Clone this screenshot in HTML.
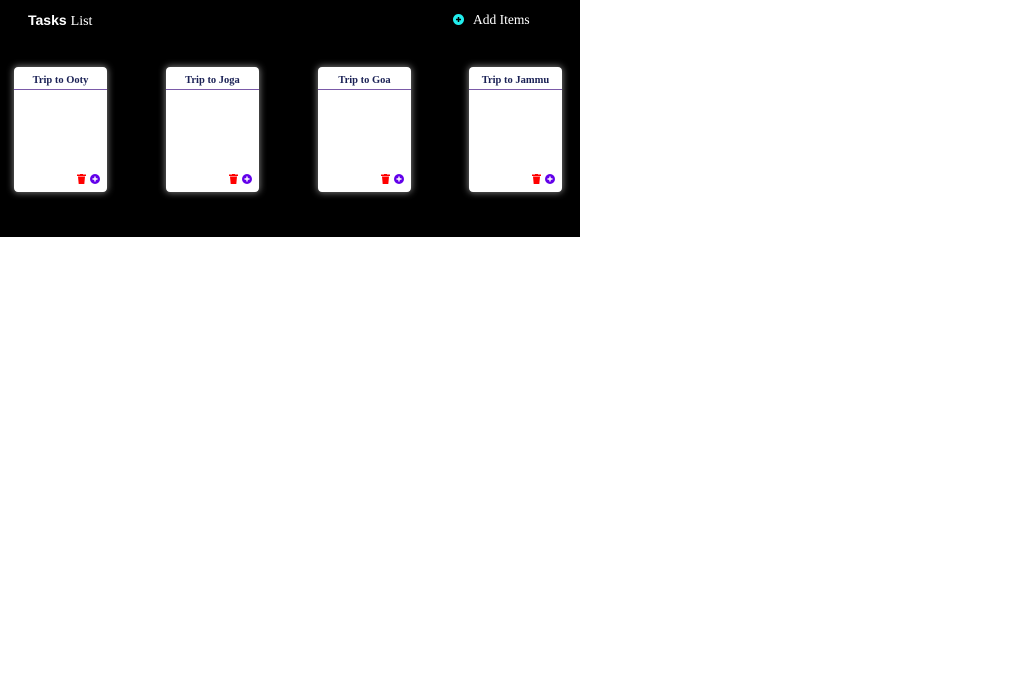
<!DOCTYPE html>
<html><head><style>
body{margin:0;background:#fff;}
.wrap{position:absolute;left:0;top:0;width:580px;height:237px;background:#000;}
.title{position:absolute;left:28px;top:12px;color:#fff;}
.title b{font-family:"Liberation Sans",sans-serif;font-size:14px;}
.title span{font-family:"Liberation Serif",serif;font-size:14px;}
.add{position:absolute;left:453px;top:12px;color:#fff;font-family:"Liberation Serif",serif;font-size:13.5px;}
.add .c{display:inline-block;width:11px;height:11px;border-radius:50%;background:#2ee;vertical-align:-1px;margin-right:9px;position:relative;}
.card{position:absolute;top:67px;width:93px;height:125px;background:#fff;border-radius:4px;box-shadow:0 0 7px 1px rgba(255,255,255,.45);}
.card h3{margin:0;height:22px;border-bottom:1px solid #7a5aa8;font:bold 10.5px "Liberation Serif",serif;color:#1a2155;text-align:center;line-height:27px;}
.tr{position:absolute;left:63px;top:107px;}
.pl{position:absolute;left:76px;top:107px;}
</style></head><body>
<div class="wrap">
<div class="title"><b>Tasks</b> <span>List</span></div>
<div class="add"><span class="c"><svg width="11" height="11" style="position:absolute;left:0;top:0"><path d="M5.5 3v5M3 5.5h5" stroke="#000" stroke-width="1.5"/></svg></span>Add Items</div>
<div class="card" style="left:14px"><h3>Trip to Ooty</h3>
<svg class="tr" width="9" height="10"><rect x="0" y="0.5" width="9" height="1.5" fill="#f00"/><rect x="3" y="0" width="3" height="1" fill="#f00"/><path d="M1 2.5h7l-.7 7.5h-5.6z" fill="#f00"/></svg>
<svg class="pl" width="10" height="10"><circle cx="5" cy="5" r="5" fill="#6200ea"/><path d="M5 2.5v5M2.5 5h5" stroke="#fff" stroke-width="1.4"/></svg></div>
<div class="card" style="left:166px"><h3>Trip to Joga</h3>
<svg class="tr" width="9" height="10"><rect x="0" y="0.5" width="9" height="1.5" fill="#f00"/><rect x="3" y="0" width="3" height="1" fill="#f00"/><path d="M1 2.5h7l-.7 7.5h-5.6z" fill="#f00"/></svg>
<svg class="pl" width="10" height="10"><circle cx="5" cy="5" r="5" fill="#6200ea"/><path d="M5 2.5v5M2.5 5h5" stroke="#fff" stroke-width="1.4"/></svg></div>
<div class="card" style="left:318px"><h3>Trip to Goa</h3>
<svg class="tr" width="9" height="10"><rect x="0" y="0.5" width="9" height="1.5" fill="#f00"/><rect x="3" y="0" width="3" height="1" fill="#f00"/><path d="M1 2.5h7l-.7 7.5h-5.6z" fill="#f00"/></svg>
<svg class="pl" width="10" height="10"><circle cx="5" cy="5" r="5" fill="#6200ea"/><path d="M5 2.5v5M2.5 5h5" stroke="#fff" stroke-width="1.4"/></svg></div>
<div class="card" style="left:469px"><h3>Trip to Jammu</h3>
<svg class="tr" width="9" height="10"><rect x="0" y="0.5" width="9" height="1.5" fill="#f00"/><rect x="3" y="0" width="3" height="1" fill="#f00"/><path d="M1 2.5h7l-.7 7.5h-5.6z" fill="#f00"/></svg>
<svg class="pl" width="10" height="10"><circle cx="5" cy="5" r="5" fill="#6200ea"/><path d="M5 2.5v5M2.5 5h5" stroke="#fff" stroke-width="1.4"/></svg></div>
</div>
</body></html>
